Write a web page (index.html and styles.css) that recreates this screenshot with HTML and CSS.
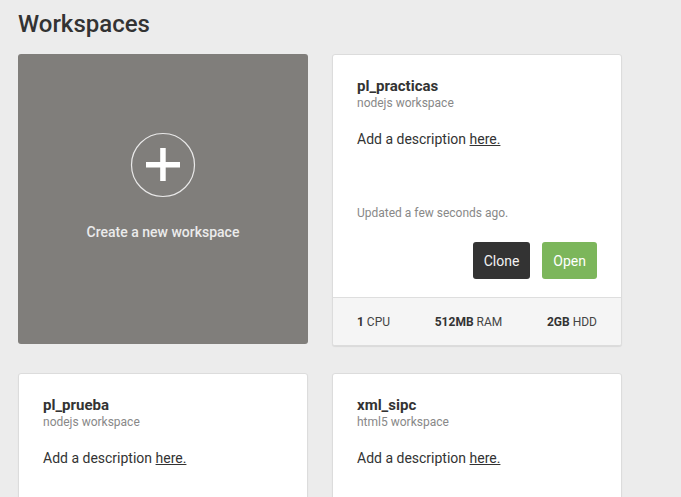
FILE: index.html
```html
<!DOCTYPE html>
<html>
<head>
<meta charset="utf-8">
<link rel="stylesheet" href="styles.css">
</head>
<body>
<h1 class="page-title">Workspaces</h1>
<div class="grid">
  <div class="create-card">
    <svg class="plus" width="66" height="66" viewBox="0 0 66 66">
      <circle cx="33" cy="33" r="31.5" fill="none" stroke="#e9e9e9" stroke-width="1.2"/>
      <rect x="16" y="30" width="34" height="5.5" fill="#ffffff"/>
      <rect x="30.2" y="16" width="5.5" height="33" fill="#ffffff"/>
    </svg>
    <div class="create-label">Create a new workspace</div>
  </div>

  <div class="ws-card">
    <div class="ws-body">
      <div class="ws-name">pl_practicas</div>
      <div class="ws-type">nodejs workspace</div>
      <div class="ws-desc">Add a description <a class="ws-link">here.</a></div>
      <div class="ws-updated">Updated a few seconds ago.</div>
      <div class="ws-actions">
        <button class="btn btn-dark">Clone</button>
        <button class="btn btn-green">Open</button>
      </div>
    </div>
    <div class="ws-footer">
      <span><b>1</b> CPU</span>
      <span><b>512MB</b> RAM</span>
      <span><b>2GB</b> HDD</span>
    </div>
  </div>

  <div class="ws-card ws-card-tall">
    <div class="ws-body">
      <div class="ws-name">pl_prueba</div>
      <div class="ws-type">nodejs workspace</div>
      <div class="ws-desc">Add a description <a class="ws-link">here.</a></div>
    </div>
  </div>

  <div class="ws-card ws-card-tall">
    <div class="ws-body">
      <div class="ws-name">xml_sipc</div>
      <div class="ws-type">html5 workspace</div>
      <div class="ws-desc">Add a description <a class="ws-link">here.</a></div>
    </div>
  </div>
</div>
</body>
</html>
```
FILE: styles.css
```css
html, body {
  margin: 0;
  background: #ececec;
}
body {
  padding: 0 18px;
  font-family: Roboto, "Liberation Sans", sans-serif;
  color: #333;
  overflow: hidden;
}
.page-title {
  margin: 10px 0 16px;
  font-size: 24px;
  line-height: 28px;
  font-weight: 500;
  color: #333;
}
.grid {
  display: grid;
  grid-template-columns: 290px 290px;
  column-gap: 24px;
  row-gap: 27px;
  align-items: start;
}
.create-card {
  height: 290px;
  background: #807e7b;
  border-radius: 3px;
  box-sizing: border-box;
  padding-top: 78px;
  display: flex;
  flex-direction: column;
  align-items: center;
}
.plus {
  display: block;
}
.create-label {
  margin-top: 24px;
  font-size: 14px;
  line-height: 20px;
  font-weight: 500;
  color: #ebebeb;
}
.ws-card {
  background: #fff;
  border: 1px solid #dcdcdc;
  border-radius: 3px;
  box-shadow: 0 1px 1px rgba(0,0,0,0.08);
  overflow: hidden;
}
.ws-card-tall {
  height: 290px;
}
.ws-body {
  padding: 22px 24px 18px;
}
.ws-name {
  font-size: 15px;
  line-height: 18px;
  font-weight: 700;
  color: #333;
}
.ws-type {
  font-size: 12px;
  line-height: 16px;
  color: #888;
}
.ws-desc {
  margin-top: 18px;
  font-size: 14px;
  line-height: 20px;
  color: #333;
}
.ws-link {
  color: #333;
  text-decoration: underline;
}
.ws-updated {
  margin-top: 56px;
  font-size: 12px;
  line-height: 16px;
  color: #888;
}
.ws-actions {
  margin-top: 21px;
  display: flex;
  justify-content: flex-end;
  gap: 12px;
}
.btn {
  height: 37px;
  padding: 0 11px;
  border: none;
  border-radius: 3px;
  font-family: Roboto, "Liberation Sans", sans-serif;
  font-size: 14px;
  color: #fff;
}
.btn-dark {
  background: #333333;
  color: #f2f2f2;
}
.btn-green {
  background: #7cb65b;
}
.ws-footer {
  height: 47px;
  border-top: 1px solid #dedede;
  background: #f5f5f5;
  padding: 0 24px;
  display: flex;
  justify-content: space-between;
  align-items: center;
  font-size: 12px;
  color: #444;
}
.ws-footer b {
  font-weight: 700;
  color: #333;
}
```
